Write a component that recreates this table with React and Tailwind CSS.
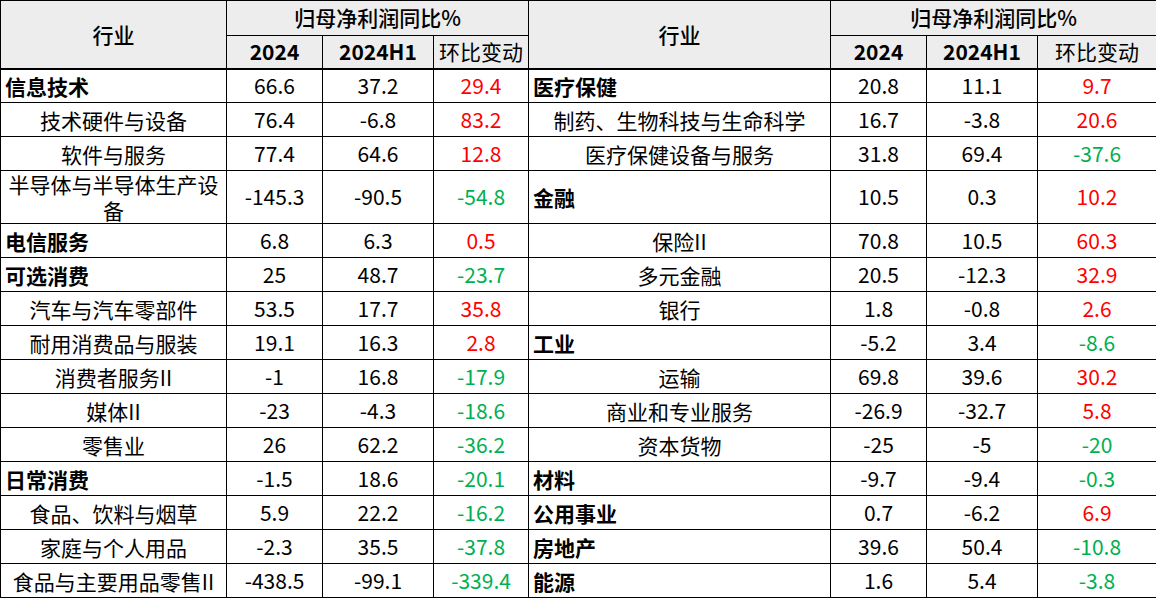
import React from 'react';

const left = [
  { name: '信息技术', main: true, v: ['66.6', '37.2', '29.4'] },
  { name: '技术硬件与设备', v: ['76.4', '-6.8', '83.2'] },
  { name: '软件与服务', v: ['77.4', '64.6', '12.8'] },
  { name: '半导体与半导体生产设备', v: ['-145.3', '-90.5', '-54.8'] },
  { name: '电信服务', main: true, v: ['6.8', '6.3', '0.5'] },
  { name: '可选消费', main: true, v: ['25', '48.7', '-23.7'] },
  { name: '汽车与汽车零部件', v: ['53.5', '17.7', '35.8'] },
  { name: '耐用消费品与服装', v: ['19.1', '16.3', '2.8'] },
  { name: '消费者服务II', v: ['-1', '16.8', '-17.9'] },
  { name: '媒体II', v: ['-23', '-4.3', '-18.6'] },
  { name: '零售业', v: ['26', '62.2', '-36.2'] },
  { name: '日常消费', main: true, v: ['-1.5', '18.6', '-20.1'] },
  { name: '食品、饮料与烟草', v: ['5.9', '22.2', '-16.2'] },
  { name: '家庭与个人用品', v: ['-2.3', '35.5', '-37.8'] },
  { name: '食品与主要用品零售II', v: ['-438.5', '-99.1', '-339.4'] },
];

const right = [
  { name: '医疗保健', main: true, v: ['20.8', '11.1', '9.7'] },
  { name: '制药、生物科技与生命科学', v: ['16.7', '-3.8', '20.6'] },
  { name: '医疗保健设备与服务', v: ['31.8', '69.4', '-37.6'] },
  { name: '金融', main: true, v: ['10.5', '0.3', '10.2'] },
  { name: '保险II', v: ['70.8', '10.5', '60.3'] },
  { name: '多元金融', v: ['20.5', '-12.3', '32.9'] },
  { name: '银行', v: ['1.8', '-0.8', '2.6'] },
  { name: '工业', main: true, v: ['-5.2', '3.4', '-8.6'] },
  { name: '运输', v: ['69.8', '39.6', '30.2'] },
  { name: '商业和专业服务', v: ['-26.9', '-32.7', '5.8'] },
  { name: '资本货物', v: ['-25', '-5', '-20'] },
  { name: '材料', main: true, v: ['-9.7', '-9.4', '-0.3'] },
  { name: '公用事业', main: true, v: ['0.7', '-6.2', '6.9'] },
  { name: '房地产', main: true, v: ['39.6', '50.4', '-10.8'] },
  { name: '能源', main: true, v: ['1.6', '5.4', '-3.8'] },
];

function NameCell({ row }) {
  return (
    <td
      className={`border border-black leading-[26px] ${
        row.main ? 'pl-[4px] text-left font-bold' : 'px-[2px] text-center'
      }`}
    >
      {row.name}
    </td>
  );
}

function Values({ row }) {
  return (
    <>
      <td className="border border-black text-center">{row.v[0]}</td>
      <td className="border border-black text-center">{row.v[1]}</td>
      <td
        className={`border border-black text-center ${
          row.v[2].startsWith('-') ? 'text-[#00b050]' : 'text-[#ff0000]'
        }`}
      >
        {row.v[2]}
      </td>
    </>
  );
}

export default function App() {
  return (
    <div className="h-[599px] w-[1156px] overflow-hidden bg-white">
      <table
        className="w-[1156px] table-fixed border-collapse text-[21px] text-black"
        style={{ fontFamily: '"Noto Sans CJK SC", "Noto Sans", sans-serif' }}
      >
        <colgroup>
          <col className="w-[226px]" />
          <col className="w-[96px]" />
          <col className="w-[111px]" />
          <col className="w-[95px]" />
          <col className="w-[302px]" />
          <col className="w-[96px]" />
          <col className="w-[111px]" />
          <col className="w-[119px]" />
        </colgroup>
        <thead className="bg-[#ededed]">
          <tr className="h-[35px]">
            <th rowSpan={2} className="border border-b-2 border-black font-medium">行业</th>
            <th colSpan={3} className="border border-black font-medium">归母净利润同比%</th>
            <th rowSpan={2} className="border border-b-2 border-black font-medium">行业</th>
            <th colSpan={3} className="border border-black font-medium">归母净利润同比%</th>
          </tr>
          <tr className="h-[33px]">
            <th className="border border-b-2 border-black font-bold">2024</th>
            <th className="border border-b-2 border-black font-bold">2024H1</th>
            <th className="border border-b-2 border-black font-normal">环比变动</th>
            <th className="border border-b-2 border-black font-bold">2024</th>
            <th className="border border-b-2 border-black font-bold">2024H1</th>
            <th className="border border-b-2 border-black font-normal">环比变动</th>
          </tr>
        </thead>
        <tbody>
          {left.map((row, i) => (
            <tr key={row.name} className={i === 3 ? 'h-[53px]' : 'h-[34px]'}>
              <NameCell row={row} />
              <Values row={row} />
              <NameCell row={right[i]} />
              <Values row={right[i]} />
            </tr>
          ))}
        </tbody>
      </table>
    </div>
  );
}
